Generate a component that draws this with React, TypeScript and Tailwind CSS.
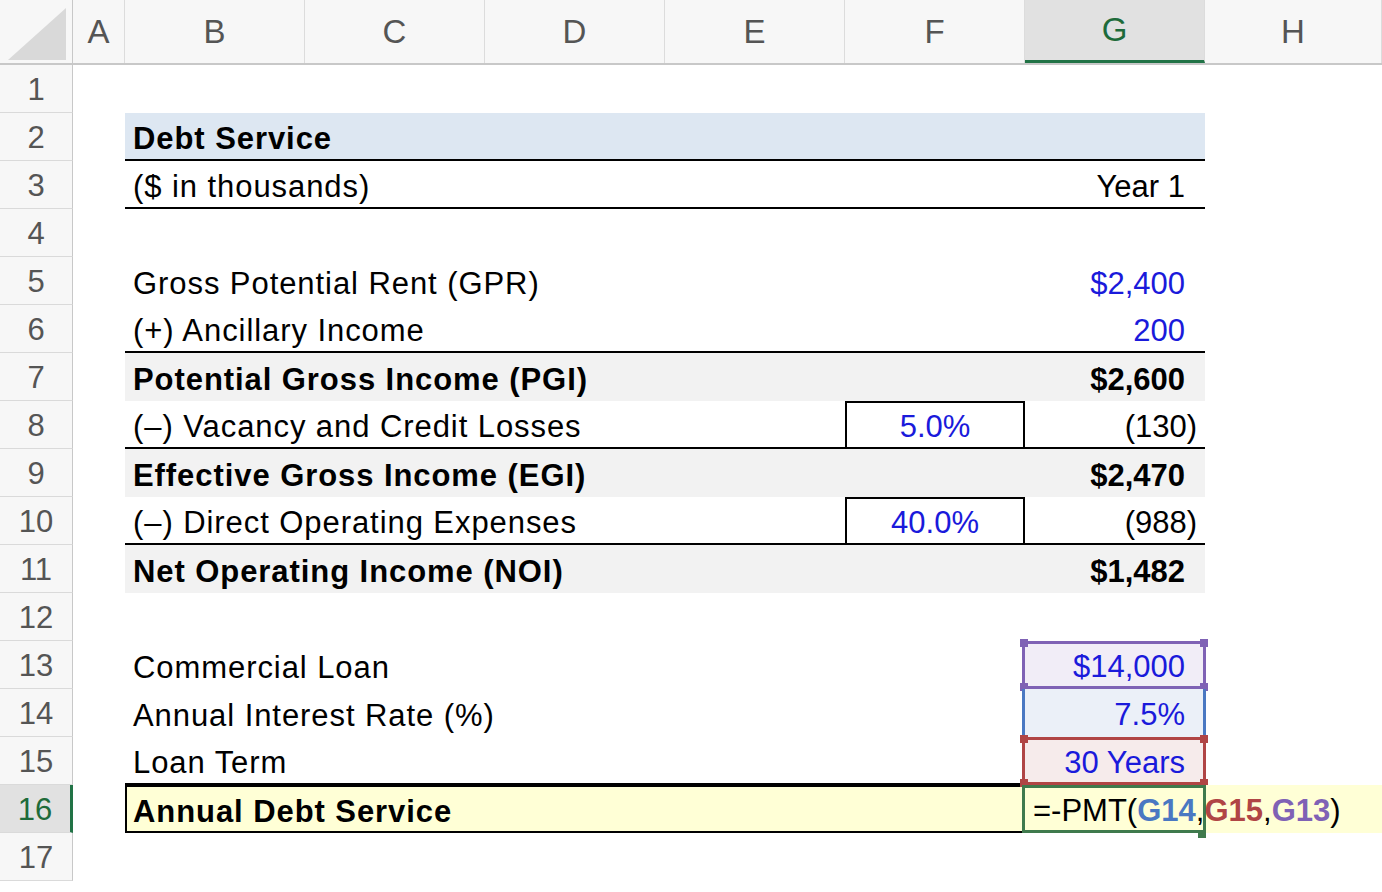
const cols = ['A', 'B', 'C', 'D', 'E', 'F', 'G', 'H'];
const widths = ['w-[52px]', 'w-[180px]', 'w-[180px]', 'w-[180px]', 'w-[180px]', 'w-[180px]', 'w-[180px]', 'flex-1'];

type Row = {
  label?: string;
  bold?: boolean;
  f?: string;
  g?: string;
  gBlue?: boolean;
  bg?: string;
  bottom?: boolean;
};

const rows: Row[] = [
  {},
  { label: 'Debt Service', bold: true, bg: 'bg-[#dde7f2]', bottom: true },
  { label: '($ in thousands)', g: 'Year 1', bottom: true },
  {},
  { label: 'Gross Potential Rent (GPR)', g: '$2,400', gBlue: true },
  { label: '(+) Ancillary Income', g: '200', gBlue: true, bottom: true },
  { label: 'Potential Gross Income (PGI)', bold: true, g: '$2,600', bg: 'bg-[#f2f2f2]' },
  { label: '(–) Vacancy and Credit Losses', f: '5.0%', g: '(130)', bottom: true },
  { label: 'Effective Gross Income (EGI)', bold: true, g: '$2,470', bg: 'bg-[#f2f2f2]' },
  { label: '(–) Direct Operating Expenses', f: '40.0%', g: '(988)', bottom: true },
  { label: 'Net Operating Income (NOI)', bold: true, g: '$1,482', bg: 'bg-[#f2f2f2]' },
  {},
];

function Dot({ cls }: { cls: string }) {
  return <div className={`absolute w-[8px] h-[8px] ${cls}`} />;
}

function RowHead({ n, active }: { n: number; active?: boolean }) {
  return (
    <div
      className={`w-[73px] shrink-0 h-full flex items-center justify-center pt-[4px] tracking-normal border-b border-[#dadada] ${
        active ? 'bg-[#e1e1e1] text-[#1e6b3a] border-r-[3px] border-r-[#217346]' : 'bg-[#f7f7f7] text-[#555] border-r border-r-[#c8c8c8]'
      }`}
    >
      {n}
    </div>
  );
}

export default function App() {
  return (
    <div className="w-[1382px] h-[892px] overflow-hidden bg-white text-[31px] tracking-[0.03em] text-black" style={{ fontFamily: '"Liberation Sans", Arial, sans-serif' }}>
      {/* column headers */}
      <div className="flex h-[65px] bg-[#f7f7f7] border-b-2 border-[#c8c8c8] tracking-normal">
        <div className="w-[73px] shrink-0 relative border-r border-[#c8c8c8]">
          <svg className="absolute left-[8px] top-[8px]" width="58" height="52" viewBox="0 0 58 52">
            <polygon points="58,0 58,52 0,52" fill="#d9d9d9" />
          </svg>
        </div>
        {cols.map((c, i) => (
          <div
            key={c}
            className={`${widths[i]} shrink-0 flex items-center justify-center text-[33px] border-r border-[#dcdcdc] ${
              c === 'G' ? 'bg-[#e1e1e1] text-[#1e6b3a] border-b-[3px] border-b-[#217346]' : 'text-[#555]'
            }`}
          >
            {c}
          </div>
        ))}
      </div>

      {rows.map((r, i) => (
        <div key={i} className="flex h-[48px]">
          <RowHead n={i + 1} />
          <div className="w-[52px] shrink-0" />
          <div className={`w-[1080px] shrink-0 flex items-center pt-[6px] ${r.bg ?? ''} ${r.bottom ? 'border-b-2 border-black' : ''} ${r.bold ? 'font-bold' : ''}`}>
            <div className="w-[720px] pl-[8px] whitespace-nowrap">{r.label}</div>
            <div className="w-[180px] h-[48px] -mt-[6px] -mb-[2px]">
              {r.f && (
                <div className="w-full h-full border-2 border-black flex items-center justify-center text-[#1a1adb] pt-[4px] tracking-normal">
                  {r.f}
                </div>
              )}
            </div>
            <div className={`w-[180px] text-right tracking-normal ${r.g?.startsWith('(') ? 'pr-[8px]' : 'pr-[20px]'} ${r.gBlue ? 'text-[#1a1adb]' : ''}`}>{r.g}</div>
          </div>
        </div>
      ))}

      {/* loan block */}
      {[
        { n: 13, label: 'Commercial Loan', g: '$14,000', cell: 'bg-[#f1edf7] border-[3px] border-[#7f62b5]' },
        { n: 14, label: 'Annual Interest Rate (%)', g: '7.5%', cell: 'bg-[#ebf0f8] border-x-[3px] border-[#4a78c2]' },
        { n: 15, label: 'Loan Term', g: '30 Years', cell: 'bg-[#f6ebeb] border-[3px] border-[#b04545]' },
      ].map((r) => (
        <div key={r.n} className="flex h-[48px]">
          <RowHead n={r.n} />
          <div className="w-[52px] shrink-0" />
          <div className={`w-[900px] shrink-0 flex items-center pt-[6px] pl-[8px] ${r.n === 15 ? 'border-b-2 border-black' : ''}`}>{r.label}</div>
          <div className={`w-[184px] -ml-[3px] shrink-0 relative flex items-center justify-end pt-[4px] pr-[18px] tracking-normal text-[#1a1adb] ${r.cell}`}>
            {r.g}
            {r.n === 13 && (
              <>
                <Dot cls="bg-[#7f62b5] -left-[5px] -top-[5px]" />
                <Dot cls="bg-[#7f62b5] -right-[5px] -top-[5px]" />
                <Dot cls="bg-[#7f62b5] -left-[5px] -bottom-[5px]" />
                <Dot cls="bg-[#7f62b5] -right-[5px] -bottom-[5px]" />
              </>
            )}
            {r.n === 15 && (
              <>
                <Dot cls="bg-[#b04545] -left-[5px] -top-[5px]" />
                <Dot cls="bg-[#b04545] -right-[5px] -top-[5px]" />
                <Dot cls="bg-[#b04545] -left-[5px] -bottom-[5px]" />
                <Dot cls="bg-[#b04545] -right-[5px] -bottom-[5px]" />
              </>
            )}
          </div>
        </div>
      ))}

      <div className="flex h-[48px]">
        <RowHead n={16} active />
        <div className="w-[52px] shrink-0" />
        <div className="w-[900px] shrink-0 bg-[#ffffd6] border-2 border-black flex items-center pt-[6px] pl-[6px] font-bold">Annual Debt Service</div>
        <div className="flex-1 bg-[#ffffd6] flex items-center relative tracking-normal">
          <div className="absolute -left-[3px] top-0 w-[184px] h-[48px] border-[3px] border-[#3f7a4d]" />
          <Dot cls="bg-[#3f7a4d] left-[173px] -bottom-[5px]" />
          <span className="relative pl-[8px] pt-[4px] whitespace-nowrap">
            =-PMT(<span className="text-[#4a78c2] font-bold">G14</span>,<span className="text-[#b04545] font-bold">G15</span>,<span className="text-[#7f62b5] font-bold">G13</span>)
          </span>
        </div>
      </div>
      <div className="flex h-[48px]">
        <RowHead n={17} />
      </div>
    </div>
  );
}
